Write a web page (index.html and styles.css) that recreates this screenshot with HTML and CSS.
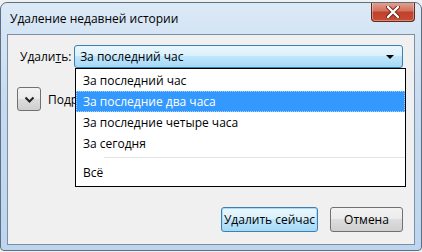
FILE: index.html
```html
<!DOCTYPE html>
<html>
	<head>
		<meta charset="UTF-8"/>
		<title>Удаление недавней истории</title>
		<link rel="stylesheet" href="styles.css">
	</head>
	<body>
		<div class="window">
			<div class="titlebar">
				<span class="title">Удаление недавней истории</span>
				<span class="close">
					<svg width="16" height="12" viewBox="0 0 16 12">
						<path d="M3 1 L13 11 M13 1 L3 11" stroke="#6b1d14" stroke-width="4" stroke-linecap="round"/>
						<path d="M3 1 L13 11 M13 1 L3 11" stroke="#fff" stroke-width="2.4" stroke-linecap="round"/>
					</svg>
				</span>
			</div>
			<div class="client">
				<div class="row">
					<span class="label">Удали<u>т</u>ь:</span>
					<div class="combo">
						<span>За последний час</span>
						<span class="arrow"></span>
					</div>
				</div>
				<div class="details">
					<span class="toggle">
						<svg width="11" height="7" viewBox="0 0 11 7">
							<path d="M1.5 1.5 L5.5 5.5 L9.5 1.5" fill="none" stroke="#222" stroke-width="2"/>
						</svg>
					</span>
					<span class="more">Подробности</span>
				</div>
				<div class="buttons">
					<span class="btn default">Удалить сейчас</span>
					<span class="btn">Отмена</span>
				</div>
				<ul class="popup">
					<li>За последний час</li>
					<li class="hot">За последние два часа</li>
					<li>За последние четыре часа</li>
					<li>За сегодня</li>
					<li class="sep"></li>
					<li>Всё</li>
				</ul>
			</div>
		</div>
	</body>
</html>
```

FILE: styles.css
```css
* {
	margin: 0;
	padding: 0;
	box-sizing: border-box;
}
body {
	width: 422px;
	height: 252px;
	overflow: hidden;
	background: #eef0f2;
	font: 12px "Open Sans", "Noto Sans", sans-serif;
	color: #000;
}
.window {
	margin-top: 2px;
	width: 422px;
	height: 249px;
	border: 1px solid #5f6f82;
	border-radius: 7px 7px 4px 4px;
	background: linear-gradient(#dce9f6, #c6dbf1 40%, #bdd5ef);
	display: flex;
	flex-direction: column;
	overflow: hidden;
}
.titlebar {
	height: 30px;
	display: flex;
	justify-content: space-between;
	align-items: flex-start;
	padding: 0 6px 0 9px;
	flex-shrink: 0;
}
.title {
	margin-top: 7px;
	font-size: 12px;
	color: #000;
}
.close {
	width: 44px;
	height: 20px;
	margin-top: -1px;
	border: 1px solid #5c2a25;
	border-top: none;
	border-radius: 0 0 4px 4px;
	background: linear-gradient(#e7a593, #d2735f 45%, #c0412b 55%, #c84c34);
	display: flex;
	align-items: center;
	justify-content: center;
	box-shadow: inset 0 0 0 1px rgba(255,255,255,0.35);
}
.client {
	position: relative;
	margin: 1px 6px 0 6px;
	height: 211px;
	border: 1px solid #7f8fa3;
	background: #f0f0f0;
	display: flex;
	flex-direction: column;
	padding: 10px 11px 12px 12px;
}
.row {
	display: flex;
	align-items: center;
	height: 23px;
}
.label {
	width: 55px;
}
.combo {
	width: 334px;
	height: 23px;
	border: 1px solid #3c7fb1;
	border-radius: 3px;
	background: linear-gradient(#eaf6fd, #d9f0fc 50%, #bee6fd 50%, #a7d9f5);
	display: flex;
	align-items: center;
	justify-content: space-between;
	padding: 0 8px 0 5px;
}
.arrow {
	width: 0;
	height: 0;
	border-left: 4px solid transparent;
	border-right: 4px solid transparent;
	border-top: 4px solid #000;
}
.details {
	margin-top: 19px;
	display: flex;
	align-items: center;
	gap: 7px;
	margin-left: -3px;
}
.more {
	width: 28px;
	overflow: hidden;
	white-space: nowrap;
}
.toggle {
	width: 24px;
	height: 24px;
	border: 1px solid #707070;
	border-radius: 3px;
	background: linear-gradient(#f2f2f2, #ebebeb 50%, #dddddd 50%, #cfcfcf);
	display: flex;
	align-items: center;
	justify-content: center;
}
.buttons {
	margin-top: auto;
	display: flex;
	justify-content: flex-end;
	gap: 12px;
}
.btn {
	height: 25px;
	border: 1px solid #707070;
	border-radius: 3px;
	background: linear-gradient(#f2f2f2, #ebebeb 50%, #dddddd 50%, #cfcfcf);
	display: flex;
	align-items: center;
	justify-content: center;
	width: 73px;
}
.btn.default {
	width: 97px;
	border-color: #3c7fb1;
	background: linear-gradient(#eaf6fd, #d9f0fc 50%, #bee6fd 50%, #a7d9f5);
	box-shadow: inset 0 0 0 1px #a6dcf6;
}
.popup {
	position: absolute;
	left: 67px;
	top: 33px;
	width: 331px;
	height: 119px;
	border: 1px solid #000;
	background: #fff;
	list-style: none;
	padding-top: 1px;
}
.popup li {
	height: 21px;
	line-height: 19px;
	padding-left: 6px;
	border: 1px solid transparent;
	white-space: nowrap;
}
.popup li.hot {
	background: #3399ff;
	color: #fff;
	border: 1px dotted #a9d2fb;
}
.popup li.sep {
	height: 5px;
	border: none;
	margin-left: 28px;
	border-top: 1px solid #e4e4e4;
	margin-top: 3px;
}
```
